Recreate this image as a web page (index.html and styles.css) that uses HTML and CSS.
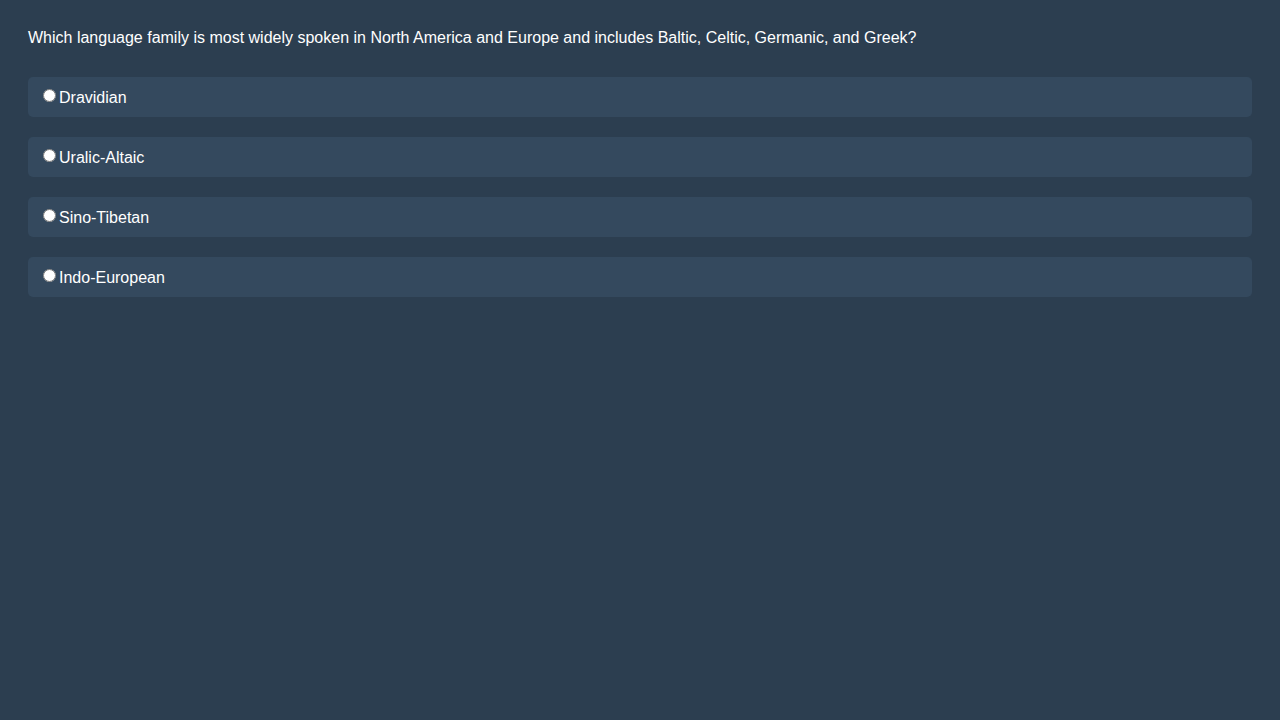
FILE: index.html
```html
<!DOCTYPE html>
<html>
<head>
<meta charset="utf-8">
<link rel="stylesheet" href="styles.css">
</head>
<body>
<div class="quiz">
  <div class="question">Which language family is most widely spoken in North America and Europe and includes Baltic, Celtic, Germanic, and Greek?</div>
  <div class="options">
    <label class="option"><input type="radio" name="q">Dravidian</label>
    <label class="option"><input type="radio" name="q">Uralic-Altaic</label>
    <label class="option"><input type="radio" name="q">Sino-Tibetan</label>
    <label class="option"><input type="radio" name="q">Indo-European</label>
  </div>
</div>
</body>
</html>
```
FILE: styles.css
```css
html, body {
  background: #2c3e50;
}
body {
  margin: 8px;
  font-family: "Liberation Sans", Arial, sans-serif;
  font-size: 16px;
  color: #ffffff;
}
.quiz {
  padding: 20px;
}
.question {
  line-height: 20px;
  margin-bottom: 29px;
}
.options {
  display: flex;
  flex-direction: column;
  gap: 20px;
}
.option {
  display: block;
  background: #34495e;
  border-radius: 5px;
  padding: 11px 10px 9px;
  line-height: 20px;
  height: 20px;
}
.option input {
  margin: 1px 3px 0 5px;
  vertical-align: 1px;
}
```
